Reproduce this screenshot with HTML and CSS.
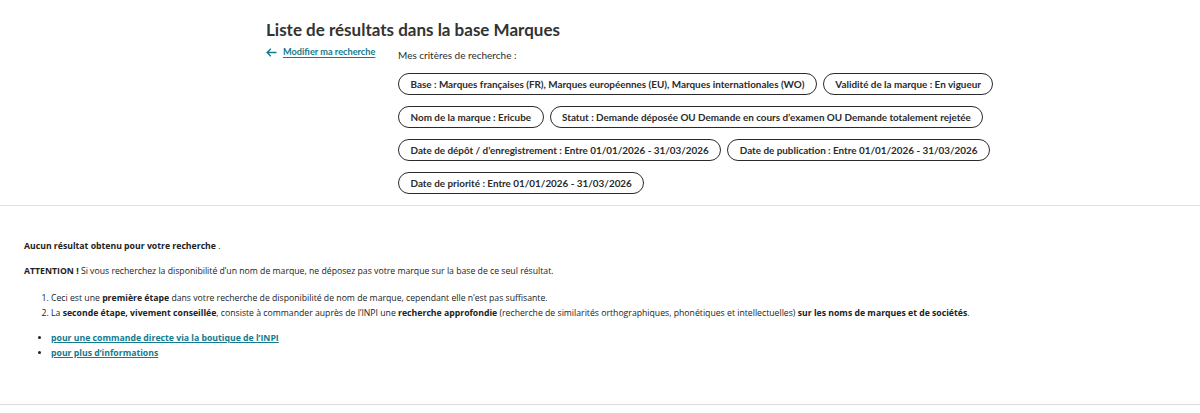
FILE: index.html
```html
<!DOCTYPE html>
<html lang="fr">
<head>
<meta charset="utf-8">
<title>Liste de résultats</title>
<link rel="stylesheet" href="styles.css">
</head>
<body>
<section class="top">
  <h1 class="title">Liste de résultats dans la base Marques</h1>
  <div class="head-grid">
    <a class="back" href="#">
      <svg class="arrow" width="11" height="9" viewBox="0 0 11 9"><path d="M10.5 4.5H1.2M4.8 0.8L1.1 4.5L4.8 8.2" fill="none" stroke="#137b8e" stroke-width="1.4"/></svg>
      <span>Modifier ma recherche</span>
    </a>
    <div class="criteria">
      <p class="crit-label">Mes critères de recherche :</p>
      <div class="chips">
        <span class="chip">Base : Marques françaises (FR), Marques européennes (EU), Marques internationales (WO)</span>
        <span class="chip">Validité de la marque : En vigueur</span>
        <span class="chip">Nom de la marque : Ericube</span>
        <span class="chip">Statut : Demande déposée OU Demande en cours d’examen OU Demande totalement rejetée</span>
        <span class="chip">Date de dépôt / d’enregistrement : Entre 01/01/2026 - 31/03/2026</span>
        <span class="chip">Date de publication : Entre 01/01/2026 - 31/03/2026</span>
        <span class="chip">Date de priorité : Entre 01/01/2026 - 31/03/2026</span>
      </div>
    </div>
  </div>
</section>
<section class="results">
  <p class="none"><strong>Aucun résultat obtenu pour votre recherche</strong> .</p>
  <p class="warn"><strong>ATTENTION !</strong> Si vous recherchez la disponibilité d’un nom de marque, ne déposez pas votre marque sur la base de ce seul résultat.</p>
  <ol class="steps">
    <li>Ceci est une <strong>première étape</strong> dans votre recherche de disponibilité de nom de marque, cependant elle n’est pas suffisante.</li>
    <li>La <strong>seconde étape, vivement conseillée</strong>, consiste à commander auprès de l’INPI une <strong>recherche approfondie</strong> (recherche de similarités orthographiques, phonétiques et intellectuelles) <strong>sur les noms de marques et de sociétés</strong>.</li>
  </ol>
  <ul class="links">
    <li><a href="#">pour une commande directe via la boutique de l’INPI</a></li>
    <li><a href="#">pour plus d’informations</a></li>
  </ul>
</section>
</body>
</html>
```
FILE: styles.css
```css
html, body {
  margin: 0;
  padding: 0;
  background: #fff;
}
body {
  color: #2b2b2b;
  font-family: Lato, "Noto Sans", sans-serif;
}
.top {
  padding: 19px 0 11px 266px;
  border-bottom: 1px solid #e2e2e2;
}
.title {
  margin: 0;
  font-size: 17px;
  font-weight: 700;
  line-height: 22px;
  color: #333;
}
.head-grid {
  display: grid;
  grid-template-columns: 132px 602px;
  margin-top: 3px;
}
.back {
  display: flex;
  align-items: center;
  gap: 6px;
  color: #137b8e;
  font-size: 9.2px;
  font-weight: 700;
  line-height: 14px;
  text-decoration: none;
  align-self: start;
  margin-top: 1px;
}
.back span {
  text-decoration: underline;
  text-underline-offset: 2px;
}
.arrow {
  display: block;
}
.crit-label {
  margin: 4px 0 0;
  font-size: 10px;
  line-height: 14px;
}
.chips {
  display: flex;
  flex-wrap: wrap;
  gap: 11px 6px;
  margin-top: 11px;
}
.chip {
  display: inline-flex;
  align-items: center;
  height: 22px;
  box-sizing: border-box;
  padding: 0 11.5px;
  border: 1px solid #2b2b2b;
  border-radius: 11px;
  font-size: 9.9px;
  font-weight: 700;
  white-space: nowrap;
}
.results {
  padding: 33px 24px 43px;
  border-bottom: 1px solid #dcdcdc;
  font-family: "Open Sans", sans-serif;
  font-size: 8.7px;
  line-height: 15px;
  color: #222;
}
.results p {
  margin: 0;
}
.results li {
  line-height: 15px;
}
.warn {
  margin-top: 10px !important;
}
.steps {
  margin: 12px 0 0;
  padding-left: 27px;
}
.links {
  margin: 10px 0 0;
  padding-left: 27px;
}
.links a {
  color: #137b8e;
  font-weight: 700;
}
```
